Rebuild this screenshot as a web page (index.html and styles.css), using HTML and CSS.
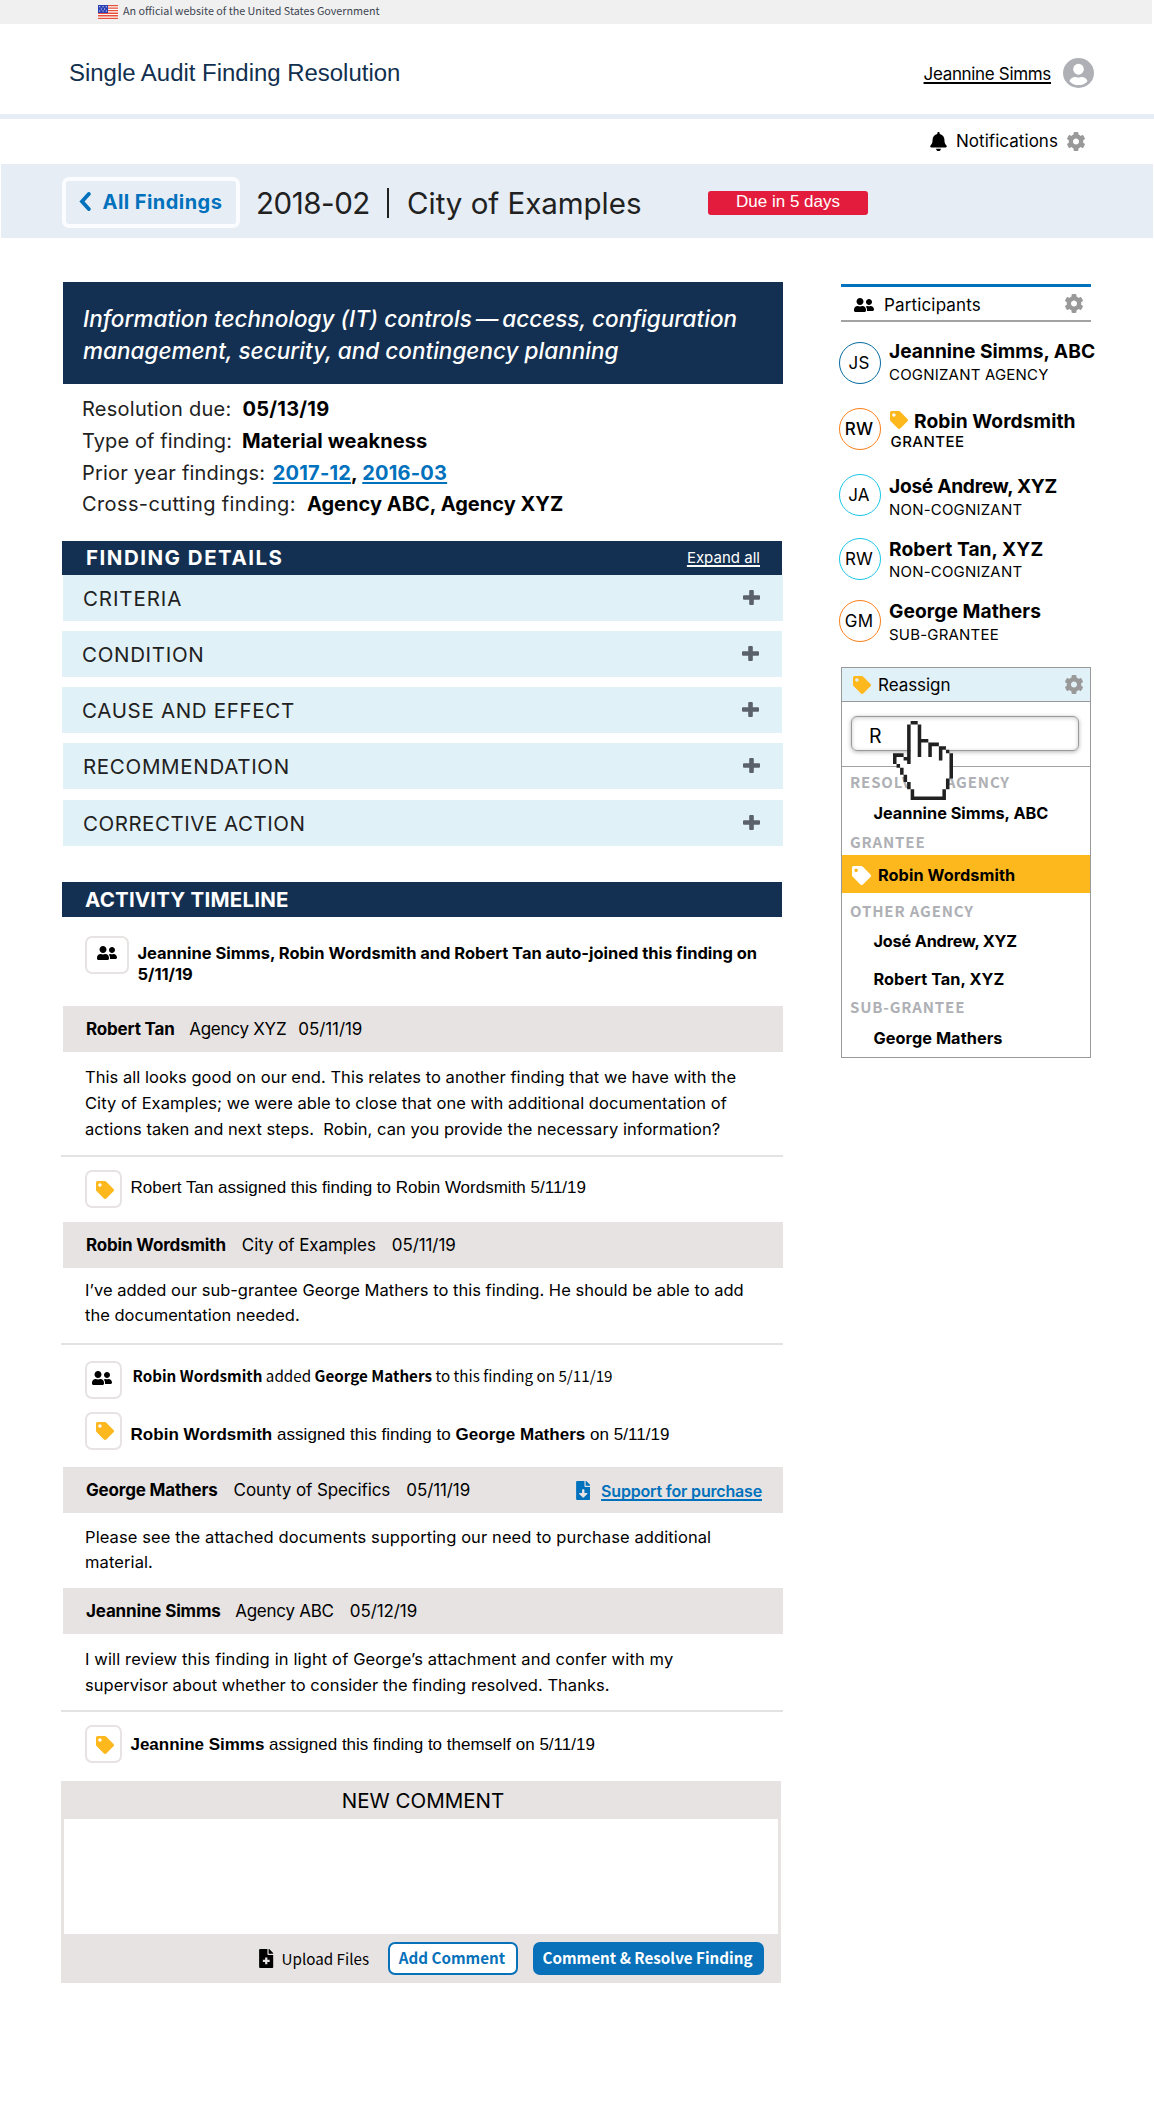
FILE: index.html
```html
<!DOCTYPE html>
<html lang="en">
<head>
<meta charset="utf-8">
<title>Single Audit Finding Resolution</title>
<link rel="stylesheet" href="styles.css">
</head>
<body>
<svg class="sprite" aria-hidden="true">
  <symbol id="i-gear" viewBox="18 8 476 496" preserveAspectRatio="none"><path d="M487.4 315.7l-42.6-24.6c4.3-23.2 4.3-47 0-70.2l42.6-24.6c4.9-2.8 7.1-8.6 5.5-14-11.1-35.6-30-67.8-54.7-94.6-3.8-4.1-10-5.1-14.8-2.3L380.8 110c-17.9-15.4-38.5-27.3-60.8-35.1V25.8c0-5.6-3.9-10.5-9.4-11.7-36.7-8.2-74.3-7.8-109.2 0-5.5 1.2-9.4 6.1-9.4 11.7V75c-22.2 7.9-42.8 19.8-60.8 35.1L88.7 85.5c-4.9-2.8-11-1.9-14.8 2.3-24.7 26.7-43.6 58.9-54.7 94.6-1.7 5.4.6 11.2 5.5 14L67.3 221c-4.3 23.2-4.3 47 0 70.2l-42.6 24.6c-4.9 2.8-7.1 8.6-5.5 14 11.1 35.6 30 67.8 54.7 94.6 3.8 4.1 10 5.1 14.8 2.3l42.6-24.6c17.9 15.4 38.5 27.3 60.8 35.1v49.2c0 5.6 3.9 10.5 9.4 11.7 36.7 8.2 74.3 7.8 109.2 0 5.5-1.2 9.4-6.1 9.4-11.7v-49.2c22.2-7.9 42.8-19.8 60.8-35.1l42.6 24.6c4.9 2.8 11 1.9 14.8-2.3 24.7-26.7 43.6-58.9 54.7-94.6 1.5-5.5-.7-11.3-5.6-14.1zM256 336c-44.1 0-80-35.9-80-80s35.9-80 80-80 80 35.9 80 80-35.9 80-80 80z"/></symbol>
  <symbol id="i-bell" viewBox="0 0 448 512"><path d="M224 512c35.32 0 63.97-28.65 63.97-64H160.03c0 35.35 28.65 64 63.97 64zm215.39-149.71c-19.32-20.76-55.47-51.99-55.47-154.29 0-77.7-54.48-139.9-127.94-155.16V32c0-17.67-14.32-32-31.98-32s-31.98 14.33-31.98 32v20.84C118.56 68.1 64.08 130.3 64.08 208c0 102.3-36.15 133.53-55.47 154.29-6 6.45-8.66 14.16-8.61 21.71.11 16.4 12.98 32 32.1 32h383.8c19.12 0 32-15.6 32.1-32 .05-7.55-2.61-15.27-8.61-21.71z"/></symbol>
  <symbol id="i-tag" viewBox="0 0 512 512"><path d="M0 252.118V48C0 21.49 21.49 0 48 0h204.118a48 48 0 0 1 33.941 14.059l211.882 211.882c18.745 18.745 18.745 49.137 0 67.882L293.823 497.941c-18.745 18.745-49.137 18.745-67.882 0L14.059 286.059A48 48 0 0 1 0 252.118zM112 64c-26.51 0-48 21.49-48 48s21.49 48 48 48 48-21.49 48-48-21.49-48-48-48z"/></symbol>
  <symbol id="i-plus" viewBox="0 0 17 15" preserveAspectRatio="none"><path d="M7.200 0h2.600q1 0 1 1v4.200h5.200q1 0 1 1v2.600q0 1-1 1h-5.200V14q0 1-1 1H7.200q-1 0-1-1V9.800H1q-1 0-1-1V6.200q0-1 1-1h5.200V1q0-1 1-1z"/></symbol>
  <symbol id="i-group" viewBox="0 32 640 448"><path d="M192 256c61.9 0 112-50.1 112-112S253.9 32 192 32 80 82.1 80 144s50.1 112 112 112zm76.8 32h-8.3c-20.8 10-43.9 16-68.5 16s-47.6-6-68.5-16h-8.3C51.6 288 0 339.6 0 403.2V432c0 26.5 21.5 48 48 48h288c26.5 0 48-21.5 48-48v-28.8c0-63.6-51.6-115.2-115.2-115.2zM480 256c53 0 96-43 96-96s-43-96-96-96-96 43-96 96 43 96 96 96zm48 32h-3.8c-13.9 4.8-28.6 8-44.2 8s-30.3-3.2-44.2-8H432c-20.4 0-39.2 5.9-55.7 15.4 24.4 26.3 39.7 61.2 39.7 99.8v38.4c0 2.2-.5 4.3-.6 6.4H592c26.5 0 48-21.5 48-48 0-61.9-50.1-112-112-112z"/></symbol>
  <symbol id="i-file-down" viewBox="0 0 384 512"><path d="M224 136V0H24C10.7 0 0 10.7 0 24v464c0 13.3 10.7 24 24 24h336c13.3 0 24-10.7 24-24V160H248c-13.2 0-24-10.8-24-24zm76.45 211.36l-96.42 95.7c-6.65 6.61-17.39 6.61-24.04 0l-96.42-95.7C73.42 337.29 80.54 320 94.82 320H160v-80c0-8.84 7.16-16 16-16h32c8.84 0 16 7.16 16 16v80h65.18c14.28 0 21.4 17.29 11.27 27.36zM377 105L279.1 7c-4.5-4.5-10.6-7-17-7H256v128h128v-6.1c0-6.3-2.5-12.4-7-16.9z"/></symbol>
  <symbol id="i-file-plus" viewBox="0 0 384 512"><path fill-rule="evenodd" d="M224 136V0H24C10.7 0 0 10.7 0 24v464c0 13.3 10.7 24 24 24h336c13.3 0 24-10.7 24-24V160H248c-13.2 0-24-10.8-24-24zM162 232h60v60h62v60h-62v62h-60v-62h-62v-60h62zM377 105L279.1 7c-4.5-4.5-10.6-7-17-7H256v128h128v-6.1c0-6.3-2.5-12.4-7-16.9z"/></symbol>
</svg>

<div class="banner">
  <svg class="flag" viewBox="0 0 20 14"><path fill="#fff" d="M0 0h20v14H0z"/><path fill="#e8503a" d="M0 0h20v1.2H0zM0 2.5h20v1.3H0zM0 5h20v1.3H0zM0 7.6h20v1.3H0zM0 10.1h20v1.3H0zM0 12.7h20V14H0z"/><path fill="#2b40b5" d="M0 0h10v8H0z"/><path fill="#fff" d="M1.2 1.3h1v1h-1zM4.5 1.3h1v1h-1zM7.8 1.3h1v1h-1zM2.8 3.4h1v1h-1zM6.1 3.4h1v1h-1zM1.2 5.5h1v1h-1zM4.5 5.5h1v1h-1zM7.8 5.5h1v1h-1z"/></svg>
  <span>An official website of the United States Government</span>
</div>

<header class="header">
  <div class="site-title">Single Audit Finding Resolution</div>
  <a class="user-link">Jeannine Simms</a>
  <svg class="avatar" viewBox="0 0 31 30"><ellipse cx="15.5" cy="15" rx="15.5" ry="15" fill="#aeb0b5"/><ellipse cx="15.5" cy="11.2" rx="5.3" ry="5.5" fill="#fff"/><path fill="#fff" d="M6.5 23.2c.8-2.800 3.600-4.200 5.400-4.200 1.300 0 2 .6 3.600.6s2.300-.6 3.600-.6c1.800 0 4.600 1.400 5.400 4.200-2.400 2.600-5.400 3.900-9 3.900s-6.600-1.300-9-3.900z"/></svg>
</header>

<div class="notifications">
  <svg class="bell"><use href="#i-bell"/></svg>
  <span>Notifications</span>
  <svg class="gear"><use href="#i-gear"/></svg>
</div>

<div class="title-bar">
  <a class="back">
    <svg class="chevron" viewBox="0 0 12 19"><path d="M9.800 2 3 9.500l6.800 7.500" fill="none" stroke="#0071bc" stroke-width="3.800" stroke-linecap="round"/></svg>
    <span>All Findings</span>
  </a>
  <h1><span class="number">2018-02</span><span class="pipe"></span><span>City of Examples</span></h1>
  <span class="due">Due in 5 days</span>
</div>

<div class="layout">
  <main>
    <h2 class="summary">Information technology (IT) controls&#8201;—&#8201;access, configuration<br>management, security, and contingency planning</h2>

    <dl class="facts">
      <div><dt>Resolution due:</dt><dd>05/13/19</dd></div>
      <div class="kind"><dt>Type of finding:</dt><dd>Material weakness</dd></div>
      <div class="tight"><dt>Prior year findings:</dt><dd><a>2017-12</a>, <a>2016-03</a></dd></div>
      <div class="loose"><dt>Cross-cutting finding:</dt><dd>Agency ABC, Agency XYZ</dd></div>
    </dl>

    <section class="details">
      <div class="section-head details-head"><h3>FINDING DETAILS</h3><a>Expand all</a></div>
      <div class="row shifted"><span class="spread">CRITERIA</span><svg class="plus"><use href="#i-plus"/></svg></div>
      <div class="row"><span>CONDITION</span><svg class="plus"><use href="#i-plus"/></svg></div>
      <div class="row"><span>CAUSE AND EFFECT</span><svg class="plus"><use href="#i-plus"/></svg></div>
      <div class="row shifted"><span>RECOMMENDATION</span><svg class="plus"><use href="#i-plus"/></svg></div>
      <div class="row shifted last"><span>CORRECTIVE ACTION</span><svg class="plus"><use href="#i-plus"/></svg></div>
    </section>

    <section class="timeline">
      <div class="section-head"><h3>ACTIVITY TIMELINE</h3></div>

      <div class="note joined">
        <span class="box"><svg class="group"><use href="#i-group"/></svg></span>
        <p>Jeannine Simms, Robin Wordsmith and Robert Tan auto-joined this finding on<br>5/11/19</p>
      </div>

      <article>
        <header class="byline"><b>Robert Tan</b><span class="agency">Agency XYZ</span><time class="near">05/11/19</time></header>
        <p class="text ruled">This all looks good on our end. This relates to another finding that we have with the<br>City of Examples; we were able to close that one with additional documentation of<br>actions taken and next steps.&nbsp; Robin, can you provide the necessary information?</p>
      </article>
      <div class="note assigned-first">
        <span class="box"><svg class="tag"><use href="#i-tag"/></svg></span>
        <p>Robert Tan assigned this finding to Robin Wordsmith 5/11/19</p>
      </div>

      <article>
        <header class="byline"><b>Robin Wordsmith</b><span>City of Examples</span><time>05/11/19</time></header>
        <p class="text ruled second">I’ve added our sub-grantee George Mathers to this finding. He should be able to add<br>the documentation needed.</p>
      </article>
      <div class="note added">
        <span class="box"><svg class="group"><use href="#i-group"/></svg></span>
        <p><b>Robin Wordsmith</b> added <b>George Mathers</b> to this finding on 5/11/19</p>
      </div>
      <div class="note assigned-second">
        <span class="box"><svg class="tag"><use href="#i-tag"/></svg></span>
        <p><b>Robin Wordsmith</b> assigned this finding to <b>George Mathers</b> on 5/11/19</p>
      </div>

      <article>
        <header class="byline"><b>George Mathers</b><span>County of Specifics</span><time>05/11/19</time>
          <a class="attachment"><svg class="file"><use href="#i-file-down"/></svg><span>Support for purchase</span></a></header>
        <p class="text third">Please see the attached documents supporting our need to purchase additional<br>material.</p>
      </article>

      <article>
        <header class="byline"><b>Jeannine Simms</b><span class="agency">Agency ABC</span><time>05/12/19</time></header>
        <p class="text ruled fourth">I will review this finding in light of George’s attachment and confer with my<br><span class="snug">supervisor about whether to consider the finding resolved. Thanks.</span></p>
      </article>
      <div class="note assigned-last">
        <span class="box"><svg class="tag"><use href="#i-tag"/></svg></span>
        <p><b>Jeannine Simms</b> assigned this finding to themself on 5/11/19</p>
      </div>
    </section>

    <section class="comment">
      <h3>NEW COMMENT</h3>
      <div class="editor"></div>
      <footer>
        <a class="upload"><svg class="file"><use href="#i-file-plus"/></svg>Upload Files</a>
        <a class="button">Add Comment</a>
        <a class="button primary">Comment &amp; Resolve Finding</a>
      </footer>
    </section>
  </main>

  <aside>
    <div class="participants-head">
      <svg class="group"><use href="#i-group"/></svg><span>Participants</span><svg class="gear"><use href="#i-gear"/></svg>
    </div>
    <ul class="people">
      <li class="p1"><span class="initials">JS</span><div><b>Jeannine Simms, ABC</b><small>COGNIZANT AGENCY</small></div></li>
      <li class="p2"><span class="initials">RW</span><div><b><svg class="tag"><use href="#i-tag"/></svg>Robin Wordsmith</b><small>GRANTEE</small></div></li>
      <li class="p3"><span class="initials">JA</span><div><b>José Andrew, XYZ</b><small>NON-COGNIZANT</small></div></li>
      <li class="p4"><span class="initials">RW</span><div><b>Robert Tan, XYZ</b><small>NON-COGNIZANT</small></div></li>
      <li class="p5"><span class="initials">GM</span><div><b>George Mathers</b><small>SUB-GRANTEE</small></div></li>
    </ul>

    <div class="reassign">
      <div class="reassign-head"><svg class="tag"><use href="#i-tag"/></svg><span>Reassign</span><svg class="gear"><use href="#i-gear"/></svg></div>
      <div class="search"><div class="field">R</div></div>
      <div class="options">
        <h4>RESOLVING AGENCY</h4>
        <div class="option o1">Jeannine Simms, ABC</div>
        <h4 class="g2">GRANTEE</h4>
        <div class="option selected"><svg class="tag"><use href="#i-tag"/></svg>Robin Wordsmith</div>
        <h4 class="g3">OTHER AGENCY</h4>
        <div class="option o3">José Andrew, XYZ</div>
        <div class="option o4">Robert Tan, XYZ</div>
        <h4 class="g4">SUB-GRANTEE</h4>
        <div class="option o5">George Mathers</div>
      </div>
      <svg class="cursor" viewBox="0 0 17 22" preserveAspectRatio="none">
        <path fill="#fff" d="M5 1h2v4h3v1h3v1h2v1h1v8h-1v3h-1v2H6v-2H5v-2H4v-2H3v-2H2v-1H1v-2h2v1h2z"/>
        <path fill="#212121" d="M5 0h2v1H5zM4 1h1v11H4zM7 1h1v9H7zM8 5h2v1H8zM10 6h1v4h-1zM11 6h2v1h-2zM13 7h1v4h-1zM14 7h1v1h-1zM15 8h1v1h-1zM16 9h1v7h-1zM15 16h1v3h-1zM14 19h1v3h-1zM5 21h9v1H5zM5 19h1v2H5zM4 17h1v2H4zM3 15h1v2H3zM2 13h1v2H2zM1 12h1v1H1zM0 9h1v3H0zM1 9h2v1H1zM3 10h1v1H3z"/>
      </svg>
    </div>
  </aside>
</div>
</body>
</html>
```
FILE: styles.css
```css
* { box-sizing: border-box; }
body { margin: 0; background: #fff; color: #000; font: 17px "Inter", "Liberation Sans", sans-serif; }
h1, h2, h3, h4, p, dl, dd, ul { margin: 0; padding: 0; font-weight: inherit; }
li { list-style: none; }
svg { display: block; flex: none; fill: currentColor; }
.sprite { position: absolute; width: 0; height: 0; }

.gear { width: 18px; height: 19px; color: #999; }
.tag { width: 18px; height: 18px; color: #fdb81e; }
.group { width: 20px; height: 14px; }
.file { width: 14.5px; height: 19px; }

.banner { display: flex; height: 24px; margin-right: 2px; padding-left: 98px; background: #f0f0f0; color: #3d4551; font: 10.75px/22.5px "Noto Sans CJK JP", sans-serif; white-space: nowrap; }
.flag { width: 20px; height: 14px; margin: 5px 5px 0 0; }

.header { display: flex; align-items: center; height: 95px; padding: 8px 60.500px 0 69px; border-bottom: 5px solid #e7edf6; }
.site-title { margin-right: auto; color: #112f4e; font: 23.95px "Liberation Sans", sans-serif; }
.user-link { margin-right: 11.500px; padding-top: 2px; letter-spacing: -.33px; text-decoration: underline; text-decoration-thickness: 2px; text-underline-offset: 2px; text-decoration-skip-ink: none; }
.avatar { width: 31px; height: 30px; }

.notifications { display: flex; align-items: center; justify-content: flex-end; height: 44px; margin-bottom: 1px; padding-right: 69px; }
.notifications span { margin: 0 9px; letter-spacing: .05px; }
.bell { width: 17px; height: 19px; }

.title-bar { display: flex; align-items: center; height: 74px; margin: 0 1px; padding: 3px 0 0 61px; background: #e6edf5; }
.back { display: flex; align-items: center; width: 178px; height: 51px; padding: 0 0 3px 12.500px; border: 4px solid #fafcff; border-radius: 7px; color: #0071bc; font-size: 20px; font-weight: 700; letter-spacing: .45px; white-space: nowrap; }
.back span { padding-top: 2px; }
.chevron { width: 12px; height: 19px; margin: 1px 12px 0 0; }
h1 { display: flex; align-items: center; width: 468px; padding: 0 0 0 16px; color: #212121; font-size: 29.5px; letter-spacing: -.03px; white-space: nowrap; }
h1 .number { width: 130px; letter-spacing: -.45px; }
h1 .pipe { width: 2px; height: 30px; margin: 0 18px 0 1px; background: #212121; }
.due { width: 160px; height: 24px; border-radius: 3px; background: #e31c3d; color: #fff; font: 17px/21px "Liberation Sans", sans-serif; text-align: center; }

.layout { display: flex; padding: 44px 0 0 62px; }
main { width: 721px; }
aside { width: 260px; margin: 2px 0 0 56px; }

.summary { height: 102px; margin-left: 1px; padding: 21.300px 0 0 20px; background: #132f51; color: #fff; font-size: 22.5px; font-style: italic; font-weight: 500; line-height: 31.7px; letter-spacing: .02px; white-space: nowrap; }

.facts { margin: 10px 0 19.800px 20px; height: 127.200px; font-size: 20px; line-height: 31.800px; letter-spacing: .25px; }
.facts div { display: flex; gap: 11px; }
.facts .kind { gap: 10px; letter-spacing: .1px; }
.facts .tight { gap: 7.500px; letter-spacing: .2px; }
.facts .loose { letter-spacing: .38px; }
.facts .loose dd { letter-spacing: .03px; }
dt { color: #212121; }
dd { font-weight: 700; }
dd a { color: #0071bc; text-decoration: underline; text-decoration-thickness: 2px; text-underline-offset: 2px; }

.section-head { display: flex; align-items: center; width: 720px; height: 35px; padding: 0 22px 0 23px; background: #132f51; color: #fff; }
.section-head h3 { margin-right: auto; font-size: 20.5px; font-weight: 700; letter-spacing: .2px; }
.details-head { height: 34px; padding-left: 24px; }
.details-head h3 { letter-spacing: 1.5px; }
.details-head a { font-size: 15px; letter-spacing: .02px; text-decoration: underline; text-decoration-thickness: 2px; text-underline-offset: 2px; text-decoration-skip-ink: none; }
.row { display: flex; align-items: center; justify-content: space-between; width: 720px; height: 46px; margin-bottom: 10px; padding: 0 23px 0 20px; background: #e1f1f8; color: #212121; font-size: 20.5px; letter-spacing: .68px; }
.row span { padding-top: 1px; }
.row .spread { letter-spacing: .9px; }
.row.shifted { margin-left: 1px; }
.row:nth-child(5) { margin-bottom: 11px; }
.row.last { margin-bottom: 36px; letter-spacing: .52px; }
.plus { width: 17px; height: 15px; color: #5b616b; }

.note { display: flex; padding-left: 23px; font: 17px/24px "Liberation Sans", sans-serif; white-space: nowrap; }
.box { display: flex; align-items: center; justify-content: center; width: 37px; height: 38px; border: 2px solid #e7e3e3; border-radius: 7px; flex: none; margin-right: 8.500px; }
.box .tag { margin: 2px 0 0 2px; }
.joined { height: 89px; padding-top: 19px; font: 700 16.5px/21px "Inter", sans-serif; letter-spacing: -.03px; }
.joined .box { width: 43.5px; margin-right: 9px; padding-bottom: 4px; }
.joined .group { width: 24px; height: 14px; }
.joined p { padding-top: 7px; }
.assigned-first { height: 65px; padding-top: 13px; }
.assigned-first p { padding-top: 6px; }
.added { height: 67px; padding-top: 16px; font: 15.2px/24px "Noto Sans CJK JP", sans-serif; }
.added .box { margin-right: 10.500px; padding: 0 3px 4px 0; }
.added p { padding-top: 2px; letter-spacing: .01px; }
.assigned-second { height: 55px; letter-spacing: .03px; }
.assigned-second p { padding-top: 11px; }
.assigned-second .box .tag { margin-top: 0; }
.assigned-last b { letter-spacing: -.02px; }
.assigned-last { height: 69px; padding-top: 13px; }
.assigned-last p { padding-top: 8px; }

.byline { display: flex; align-items: center; height: 46px; margin-left: 1px; padding: 1px 21px 0 23px; background: #e6e3e2; gap: 16px; white-space: nowrap; letter-spacing: -.09px; }
.byline b { letter-spacing: -.16px; }
.byline .agency { margin-left: -1.500px; letter-spacing: -.25px; }
.byline .near { margin-left: -4px; }
.attachment { display: flex; align-items: center; gap: 11px; margin: 1px 0 0 auto; color: #0071bc; font-size: 16px; font-weight: 600; letter-spacing: -.18px; }
.attachment span { text-decoration: underline; text-decoration-thickness: 2px; text-underline-offset: 2px; text-decoration-skip-ink: none; }
.text { margin-left: -1px; padding: 12px 0 13px 24px; font-size: 16.500px; line-height: 26px; letter-spacing: .04px; white-space: nowrap; }
.ruled { border-bottom: 2px solid #e4e3e3; }
.second { height: 77px; padding-top: 10px; line-height: 25.300px; letter-spacing: .01px; }
.third { height: 75px; padding-top: 12px; line-height: 25.300px; letter-spacing: .1px; }
.fourth { height: 78px; padding-top: 13px; line-height: 25.700px; letter-spacing: .13px; }
.snug { letter-spacing: .02px; }

.comment { display: flex; flex-direction: column; width: 720px; height: 202px; margin-left: -1px; padding: 0 3px; background: #e7e3e2; }
.comment h3 { height: 38px; padding-left: 4px; font-size: 20.5px; line-height: 39px; text-align: center; }
.editor { height: 115px; background: #fff; }
.comment footer { display: flex; align-items: center; justify-content: flex-end; height: 49px; padding-right: 14px; font: 15.200px/1 "Noto Sans CJK JP", sans-serif; white-space: nowrap; }
.upload { display: flex; align-items: center; gap: 8px; margin-right: 19px; }
.button { display: flex; align-items: center; justify-content: center; width: 130px; height: 33px; margin-right: 15px; padding: 0 2px 1px 0; border: 2px solid #0871ba; border-radius: 7px; background: #fff; color: #0871ba; font-weight: 700; }
.button.primary { width: 231px; margin-right: 0; background: #0871ba; color: #fff; }

.participants-head { display: flex; align-items: center; width: 250px; height: 38px; margin-left: 2px; padding: 2px 8px 0 13px; border-top: 3px solid #0071bc; border-bottom: 2px solid #a3a3a3; }
.participants-head span { margin: 0 auto 0 10px; letter-spacing: .15px; }
.participants-head .gear { margin-top: -2px; }
.people li { display: flex; height: 42px; margin-bottom: 22px; gap: 8px; white-space: nowrap; }
.people { padding-top: 20px; }
.initials { display: flex; align-items: center; justify-content: center; width: 42px; height: 42px; border: 1.500px solid #1ac6e8; border-radius: 50%; flex: none; padding-right: 2px; letter-spacing: .2px; }
.people b { display: flex; height: 22px; font-size: 19.200px; line-height: 22px; letter-spacing: .07px; }
.people small { display: block; font-size: 15px; line-height: 22px; letter-spacing: .2px; }
.people .p1 { margin-bottom: 24px; }
.p1 div { margin-top: -2px; }
.p1 b { letter-spacing: 0; }
.p1 .initials { border-color: #046b9e; }
.p1 small, .p3 small, .p5 small { margin-top: 1.500px; }
.people .p2 { margin-bottom: 24px; }
.p2 div { padding-top: 2px; }
.p2 .initials { border-color: #f98016; font-weight: 500; }
.p2 .tag { margin: 1px 6px 0 1px; }
.p2 small { margin-top: -1.500px; padding-left: 1.500px; font-weight: 500; letter-spacing: .45px; }
.p3 div { padding-top: 1px; }
.p3 b { letter-spacing: -.3px; }
.p4 small { margin-top: 1px; }
.people .p4 { margin-bottom: 20px; }
.people .p5 { margin-bottom: 25px; }
.p5 .initials { border-color: #f98016; }

.reassign { position: relative; width: 250px; height: 391px; margin-left: 2px; border: 1px solid #999; }
.reassign-head { display: flex; align-items: center; height: 34px; padding: 0 7px 0 11px; border-bottom: 1px solid #999; background: #e1f1f8; }
.reassign-head span { margin: 0 auto 0 7px; letter-spacing: -.05px; }
.search { height: 65px; padding: 14px 0 0 9px; border-bottom: 1px solid #a3a3a3; }
.field { width: 228px; height: 35px; padding-left: 17px; border: 1px solid #999; border-radius: 6px; box-shadow: 0 1px 4px rgba(0, 0, 0, .3), inset 0 1px 4px rgba(0, 0, 0, .2); font-size: 19.500px; line-height: 38px; }
.options { padding-top: 2px; }
h4 { padding-left: 8px; color: #aeb0b5; font: 700 15px/24px "Noto Sans CJK JP", sans-serif; letter-spacing: .85px; }
h4:first-child { padding-top: 1px; margin-bottom: -1px; }
.option { display: flex; height: 26px; padding-left: 31.500px; font-size: 16.300px; font-weight: 700; line-height: 26px; letter-spacing: .06px; }
.o1 { margin-top: 7px; letter-spacing: 0; }
.g2 { margin-top: 3.500px; }
.selected { align-items: center; height: 37.500px; margin-top: 1.500px; padding: 2px 0 0 10px; background: #fdb81e; }
.selected .tag { width: 19px; height: 19px; margin: 1px 7px 0 0; color: #fff; }
.g3 { margin-top: 6px; }
.o3 { margin-top: 5.300px; letter-spacing: -.2px; }
.o4 { margin-top: 12px; }
.g4 { margin-top: 3.400px; }
.o5 { margin-top: 5.800px; }
.cursor { position: absolute; left: 51px; top: 53px; width: 60px; height: 79px; }
```
